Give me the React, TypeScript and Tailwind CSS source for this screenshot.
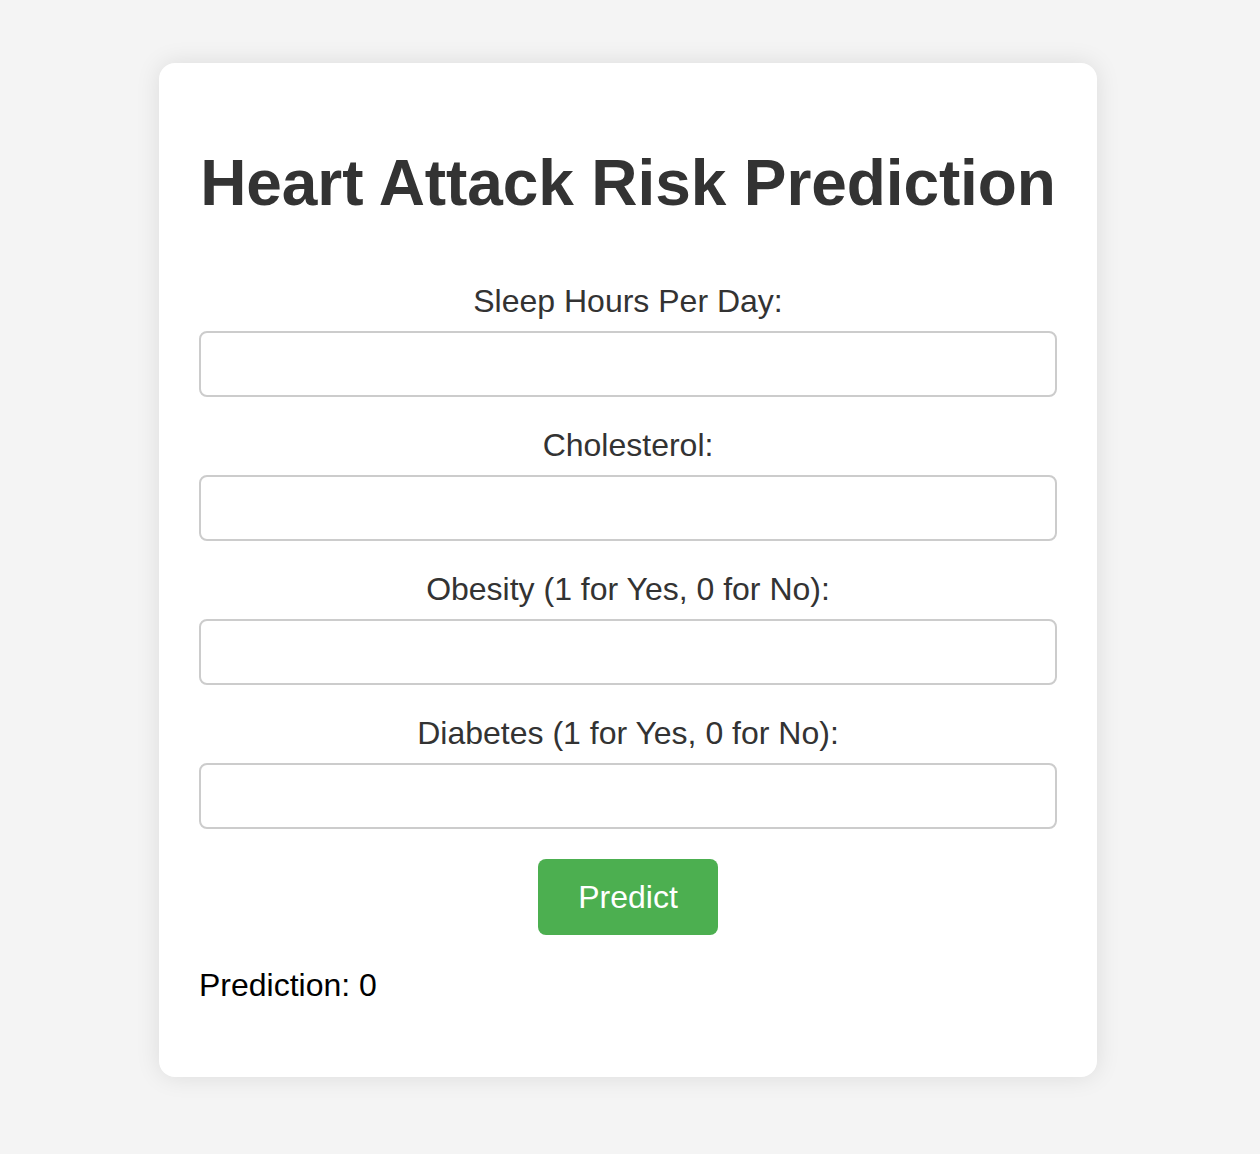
import React from "react";

const fields = [
  "Sleep Hours Per Day:",
  "Cholesterol:",
  "Obesity (1 for Yes, 0 for No):",
  "Diabetes (1 for Yes, 0 for No):",
];

export default function App() {
  return (
    <div
      className="min-h-[1154px] w-full bg-[#f4f4f4] pt-[63px]"
      style={{ fontFamily: '"Liberation Sans", Arial, Helvetica, sans-serif' }}
    >
      <div className="ml-[159px] w-[938px] rounded-[16px] bg-white px-[40px] pt-[40px] pb-[41px] shadow-[0_0_24px_rgba(0,0,0,0.1)]">
        <h1 className="-mx-[4px] mt-[43px] mb-[63px] whitespace-nowrap text-center text-[64px] font-bold leading-[74px] tracking-[-0.1px] text-[#333]">
          Heart Attack Risk Prediction
        </h1>
        <form onSubmit={(e) => e.preventDefault()}>
          {fields.map((f) => (
            <div key={f}>
              <label className="mb-[11px] block text-center text-[32px] leading-[37px] text-[#333]">
                {f}
              </label>
              <input
                type="text"
                className="mb-[30px] block h-[66px] w-full rounded-[8px] border-2 border-[#cccccc] bg-white px-[16px] text-[27px] outline-none"
              />
            </div>
          ))}
          <div className="flex justify-center">
            <button
              type="submit"
              className="h-[76px] rounded-[8px] bg-[#4caf50] px-[40px] text-[32px] leading-[37px] text-white"
            >
              Predict
            </button>
          </div>
        </form>
        <p className="mt-[32px] mb-[32px] text-[32px] leading-[37px] text-black">
          Prediction: 0
        </p>
      </div>
    </div>
  );
}
